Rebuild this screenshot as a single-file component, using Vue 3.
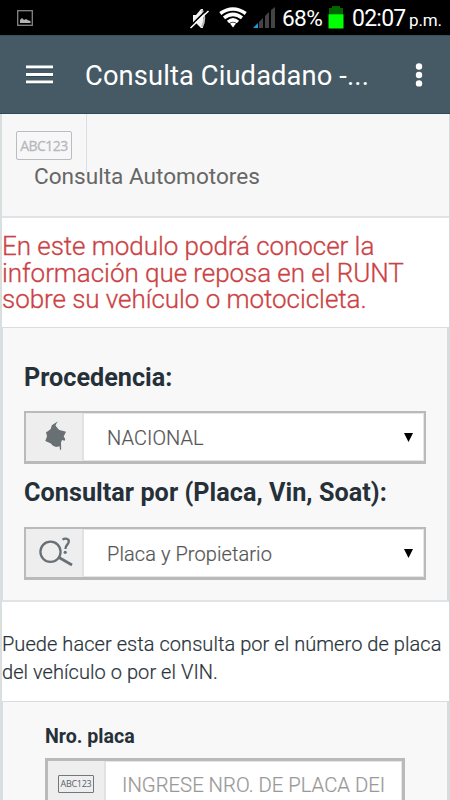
<script setup>
const fields = [
  { id: 'origin', label: 'Procedencia:', value: 'NACIONAL', icon: 'map' },
  { id: 'search', label: 'Consultar por (Placa, Vin, Soat):', value: 'Placa y Propietario', icon: 'search' },
]
</script>

<template>
  <div class="screen">
    <div class="status">
      <svg class="picture" width="16" height="16" viewBox="0 0 16 16">
        <rect x="0.7" y="0.7" width="14.6" height="14.6" fill="none" stroke="#858585" stroke-width="1.3" />
        <path d="M3 13V10l2-2 2 2 2-1 2 1.3 2.5.7v2z" fill="#b5b5b5" />
      </svg>
      <svg class="mute" width="20" height="22" viewBox="0 0 20 22">
        <path d="M3 7h3l5-6h2v19h-2l-5-5H3z" fill="#f2f2f2" />
        <path d="M12 2q4.5 8 0 17" fill="none" stroke="#bbb" stroke-width="2" />
        <path d="M0 18.5L17 1.5" stroke="#000" stroke-width="1.6" />
        <path d="M.5 20L18.5 3" stroke="#fff" stroke-width="1.5" />
      </svg>
      <svg class="wifi" width="28" height="21" viewBox="0 0 28 21">
        <g fill="none" stroke="#fff" stroke-width="3.5">
          <path d="M1.3 6.5Q14-2.6 26.7 6.5" />
          <path d="M5 10.8Q14 4 23 10.8" />
          <path d="M9 15Q14 10.8 19 15" />
        </g>
        <path d="M11 16.6Q14 14.6 17 16.6L14 20.4z" fill="#fff" />
      </svg>
      <svg class="signal" width="24" height="22" viewBox="0 0 24 22">
        <path d="M1 21l5-5v5z" fill="#169ee5" />
        <path d="M7 15l4-4v10H7zM13 9l4-4v16h-4zM19 3l4-3v21h-4z" fill="#444" />
      </svg>
      <span class="percent">68%</span>
      <svg class="battery" width="16" height="23" viewBox="0 0 16 23">
        <path d="M1 2h3V0h8v2h3v7H1z" fill="#006500" />
        <path d="M.5 8.3h15V22.5H.5z" fill="#0f0" />
      </svg>
      <span class="clock">02:07</span><span class="ampm">p.m.</span>
    </div>
    <header class="bar">
      <svg class="menu" width="28" height="20" viewBox="0 0 28 20">
        <path d="M0 2h27M0 9.5h27M0 17h27" stroke="#fff" stroke-width="3.2" />
        <path d="M0 4h27M0 11.5h27M0 19h27" stroke="#20434e" stroke-width=".7" />
      </svg>
      <h1>Consulta Ciudadano -...</h1>
      <svg class="more" width="8" height="24" viewBox="0 0 8 24">
        <g fill="#fff"><circle cx="4" cy="3.5" r="3.2" /><circle cx="4" cy="12" r="3.2" /><circle cx="4" cy="20.4" r="3.2" /></g>
      </svg>
    </header>
    <main>
      <div class="crumb">
        <div class="tab"><span class="plate">ABC123</span></div>
        <span class="crumb-title">Consulta Automotores</span>
      </div>
      <div class="notice">En este modulo podrá conocer la<br>información que reposa en el RUNT<br>sobre su vehículo o motocicleta.</div>
      <section class="panel">
        <div v-for="f in fields" :key="f.id" class="field">
          <div class="label" :class="f.id">{{ f.label }}</div>
          <div class="select">
            <div class="addon">
              <svg v-if="f.icon === 'map'" class="map" width="21" height="30" viewBox="0 0 21 30">
                <path d="M13 .3L9.5 2.5 6.8 4.2 5.7 8 2.5 10.5 1 11l1 4.2L.3 20l5.2 2.3 2.5 2.4 3 1.3 3.6-.8L15 29.3l1.2-1L16 21.5l1-2.5 2.7.7.5-1.7-1.5-2.5L21 10.8 16.5 9.5 14.2 9l-2-2.3-1.7-2.2 1.2-2.5z" fill="#697074" />
              </svg>
              <svg v-else class="lens" width="36" height="30" viewBox="0 0 36 30">
                <circle cx="12.5" cy="14.8" r="10.1" fill="none" stroke="#687075" stroke-width="2.3" />
                <path d="M21 20.5L34 28" stroke="#687075" stroke-width="2.7" />
                <path d="M24.5 2.6C27 1 31.5 1.5 30.7 5C30.3 7.7 27.4 8 27.4 12" fill="none" stroke="#687075" stroke-width="2.3" />
                <circle cx="27.2" cy="15.3" r="1.6" fill="#687075" />
              </svg>
            </div>
            <span class="value">{{ f.value }}</span>
            <svg class="arrow" width="9" height="9" viewBox="0 0 9 9"><path d="M0 0h9L4.5 9z" fill="#000" /></svg>
          </div>
        </div>
      </section>
      <div class="help">Puede hacer esta consulta por el número de placa<br>del vehículo o por el VIN.</div>
      <section class="panel plate-panel">
        <div class="plate-label">Nro. placa</div>
        <div class="select input">
          <div class="addon"><span class="plate small">ABC123</span></div>
          <span class="value placeholder">INGRESE NRO. DE PLACA DEI</span>
        </div>
      </section>
    </main>
  </div>
</template>

<style>
body { margin: 0; overflow: hidden; }
</style>
<style scoped>
* { box-sizing: border-box; }
svg { flex: none; display: block; }
.screen { width: 450px; height: 800px; overflow: hidden; background: #fff; font-family: Roboto, sans-serif; white-space: nowrap; display: flex; flex-direction: column; }
.status { height: 35px; flex: none; background: #000; color: #fff; display: flex; align-items: center; padding-left: 17px; }
.mute { margin-left: 157px; margin-top: 2px; }
.wifi { margin-left: 9px; }
.signal { margin-left: 5px; }
.percent { margin-left: 6px; width: 40px; font-size: 22.7px; line-height: 35px; padding-top: 1px; letter-spacing: -.65px; }
.battery { margin-left: 6px; }
.clock { margin-left: 8px; width: 55px; font-size: 23px; padding-top: 1px; letter-spacing: -.75px; }
.ampm { margin-left: 2px; font-size: 17px; padding-top: 5px; letter-spacing: -.15px; }
.bar { height: 79px; flex: none; background: #455a64; border-top: 1px solid #38505b; border-bottom: 1px solid #294a58; display: flex; align-items: center; padding: 0 27px 0 26px; color: #fff; }
h1 { margin: 2px 0 0 31px; width: 299px; font-size: 27.3px; font-weight: 400; letter-spacing: .12px; }
.more { margin-left: auto; }
main { flex: 1; min-height: 0; border-left: 2px solid #d9dee1; border-right: 1px solid #d5dadd; }
.crumb { height: 104px; background: #f7f7f7; border-bottom: 2px solid #e0e3e6; }
.tab { width: 85px; height: 58px; border-right: 1px solid #dcdde5; padding: 17px 0 0 14px; }
.plate { display: flex; align-items: center; justify-content: center; width: 56px; height: 29px; border: 1.5px solid #bbbcc2; border-radius: 2px; color: #b6b7bc; font: 14px/1 "Open Sans", sans-serif; letter-spacing: -.55px; -webkit-text-stroke: .3px #b6b7bc; }
.crumb-title { display: block; margin: -8px 0 0 32px; color: #666; font-size: 22.6px; line-height: 26px; }
.notice { height: 109px; padding-top: 15px; font-size: 26px; line-height: 26.7px; letter-spacing: -.05px; font-weight: 300; color: #cb4244; -webkit-text-stroke: .3px #cb4244; }
.panel { height: 275px; background: #f8f8f8; border: 1px solid #dadddf; border-right: 2px solid #d5dbde; border-bottom: 2px solid #e0e4e7; padding: 32px 21px 0 21px; display: flex; flex-direction: column; }
.field { display: flex; flex-direction: column; }
.label { color: #263038; font-size: 25.2px; font-weight: 700; line-height: 35px; height: 51px; }
.label.search { height: 63px; padding-top: 11px; letter-spacing: .04px; }
.select { height: 53px; border: 2px solid #b9babb; border-bottom-width: 3px; background: #fff; display: flex; align-items: stretch; box-shadow: inset 0 0 0 1px #e6e6e6; color: #555; }
.addon { width: 58px; flex: none; background: #eee; border-right: 2px solid #e2e2e2; display: flex; align-items: center; justify-content: center; }
.map { margin: 0 0 2px 2px; }
.lens { margin: 0 0 3px 3px; }
.value { align-self: center; margin-left: 23px; padding-top: 2px; font-size: 20px; letter-spacing: .08px; font-weight: 300; -webkit-text-stroke: .2px; }
.arrow { margin: auto 11px auto auto; }
.help { height: 99px; padding-top: 28px; font-size: 20px; line-height: 28px; letter-spacing: .06px; color: #29333a; font-weight: 300; -webkit-text-stroke: .2px; }
.plate-panel { height: 130px; padding: 22px 42px 0 42px; }
.plate-label { height: 34px; flex: none; line-height: 26px; color: #263038; font-size: 19.6px; font-weight: 700; }
.input { border: 3px solid #b9babb; height: 51px; flex: none; }
.plate.small { width: 36px; height: 18px; border-color: #71787d; color: #596167; font-size: 9px; letter-spacing: -.3px; border-radius: 1px; -webkit-text-stroke: 0; }
.placeholder { color: #999; margin-left: 16px; font-size: 20.3px; letter-spacing: 0; }
</style>
